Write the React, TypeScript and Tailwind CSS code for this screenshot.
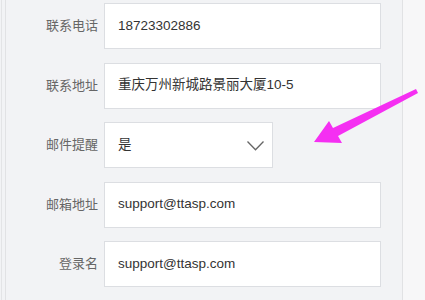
interface Field {
  label: string;
  value: string;
  select?: boolean;
}

const fields: Field[] = [
  { label: '联系电话', value: '18723302886' },
  { label: '联系地址', value: '重庆万州新城路景丽大厦10-5' },
  { label: '邮件提醒', value: '是', select: true },
  { label: '邮箱地址', value: 'support@ttasp.com' },
  { label: '登录名', value: 'support@ttasp.com' },
];

const font = { fontFamily: 'Arial, "Liberation Sans", "Noto Sans CJK SC", sans-serif' };

export default function App() {
  return (
    <div className="relative w-[425px] h-[300px] overflow-hidden bg-[#f2f3f5] flex" style={font}>
      {/* outer frame line */}
      <div className="ml-px h-full border-l border-[#e3e4e6]" />

      {/* form panel */}
      <div className="ml-[3px] w-[398px] h-full border-x border-[#e1e2e4] bg-[#f2f3f5]">
        <div className="flex flex-col gap-[13.5px] pt-[3px]">
          {fields.map((f) => (
            <div key={f.label} className="flex items-center h-[46px]">
              <div className="w-[92px] text-right text-[13px] text-[#666]">{f.label}</div>
              <div
                className={`ml-[6px] h-full flex items-center justify-between bg-white border border-[#dcdee2] pl-[13px] text-[13.5px] text-[#333] ${
                  f.select ? 'w-[169px] pr-[8px]' : 'w-[277px]'
                }`}
              >
                <span>{f.value}</span>
                {f.select && (
                  <svg width="17" height="10" viewBox="0 0 17 10" className="mt-[1px]">
                    <polyline points="0.5,0.5 8.5,8.8 16.5,0.5" fill="none" stroke="#666" strokeWidth="1.3" />
                  </svg>
                )}
              </div>
            </div>
          ))}
        </div>
      </div>

      {/* right gutter */}
      <div className="flex-1 h-full bg-[#f7f7f8]" />

      {/* annotation arrow */}
      <svg className="absolute left-0 top-0" width="425" height="300" viewBox="0 0 425 300">
        <polygon
          points="416,89 418,93 338,136 342,143 314,142 329,121 333,128"
          fill="#f52ff2"
        />
      </svg>
    </div>
  );
}
